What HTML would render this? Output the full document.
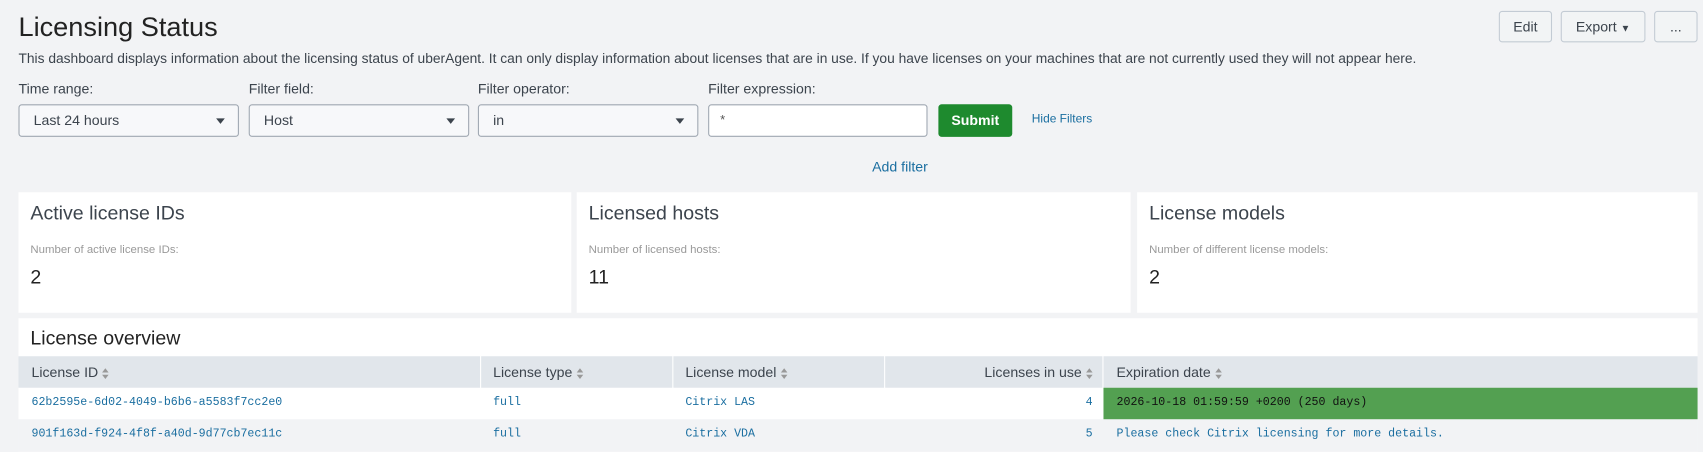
<!DOCTYPE html>
<html><head><style>
*{box-sizing:border-box;margin:0;padding:0}
html,body{width:1703px;height:452px;overflow:hidden;background:#f2f3f5}
body{font-family:"Liberation Sans",sans-serif;color:#3c444d;position:relative}
#w{position:absolute;left:0;top:0;width:1568px;height:416px;transform:scale(1.0861);transform-origin:0 0}
.a{position:absolute;white-space:nowrap}
.btn{position:absolute;top:10px;height:29px;border:1px solid #c3cbd4;border-radius:3px;background:#f2f4f5;font-size:13px;color:#3c444d;text-align:center;line-height:27px}
.lbl{position:absolute;top:74px;font-size:13px;color:#3c444d}
.dd{position:absolute;top:96px;height:30px;width:203px;border:1px solid #a0a8b2;border-radius:3px;background:#f7f8fa;font-size:13px;line-height:28px;padding-left:13px}
.dd:after{content:"";position:absolute;right:12px;top:12px;border-left:4px solid transparent;border-right:4px solid transparent;border-top:5px solid #3c444d}
.panel{position:absolute;background:#fff}
.pt{position:absolute;left:11px;top:9px;font-size:18px;color:#3c444d}
.ps{position:absolute;left:11px;top:47px;font-size:10.5px;color:#999}
.pv{position:absolute;left:11px;top:68px;font-size:18px;color:#222}
.th{position:absolute;top:328px;height:29px;background:#e1e6eb;font-size:13px;line-height:29px;color:#3c444d}
.s{display:inline-block;vertical-align:middle;margin-left:4px;width:6px;height:10px;position:relative}
.s:before{content:"";position:absolute;top:0;left:0;border-left:3px solid transparent;border-right:3px solid transparent;border-bottom:4px solid #999}
.s:after{content:"";position:absolute;bottom:0;left:0;border-left:3px solid transparent;border-right:3px solid transparent;border-top:4px solid #999}
.td{position:absolute;height:29px;line-height:29px;font-family:"Liberation Mono",monospace;font-size:10.7px;color:#1a6ea0}
</style></head><body><div id="w">
<div class="a" style="left:17px;top:11px;font-size:25px;color:#222">Licensing Status</div>
<div class="a" style="left:17px;top:47px;font-size:12.7px;color:#3c444d">This dashboard displays information about the licensing status of uberAgent. It can only display information about licenses that are in use. If you have licenses on your machines that are not currently used they will not appear here.</div>
<div class="btn" style="left:1380px;width:49px">Edit</div>
<div class="btn" style="left:1437px;width:78px">Export <span style="font-size:9px">▼</span></div>
<div class="btn" style="left:1523px;width:40px">...</div>

<div class="lbl" style="left:17px">Time range:</div>
<div class="lbl" style="left:229px">Filter field:</div>
<div class="lbl" style="left:440px">Filter operator:</div>
<div class="lbl" style="left:652px">Filter expression:</div>
<div class="dd" style="left:17px">Last 24 hours</div>
<div class="dd" style="left:229px">Host</div>
<div class="dd" style="left:440px">in</div>
<div class="a" style="left:652px;top:96px;width:202px;height:30px;border:1px solid #a0a8b2;border-radius:3px;background:#fff;font-size:12px;padding:6px 10px;color:#555">*</div>
<div class="a" style="left:864px;top:96px;width:68px;height:30px;border-radius:3px;background:#1e8a2e;color:#fff;font-weight:bold;font-size:13px;text-align:center;line-height:30px">Submit</div>
<div class="a" style="left:950px;top:104px;font-size:11px;color:#1a6ea0">Hide Filters</div>
<div class="a" style="left:803px;top:146px;font-size:13px;color:#1a6ea0">Add filter</div>

<div class="panel" style="left:17px;top:177px;width:509px;height:111px"><div class="pt">Active license IDs</div><div class="ps">Number of active license IDs:</div><div class="pv">2</div></div>
<div class="panel" style="left:531px;top:177px;width:510px;height:111px"><div class="pt">Licensed hosts</div><div class="ps">Number of licensed hosts:</div><div class="pv">11</div></div>
<div class="panel" style="left:1047px;top:177px;width:516px;height:111px"><div class="pt">License models</div><div class="ps">Number of different license models:</div><div class="pv">2</div></div>

<div class="panel" style="left:17px;top:293px;width:1546px;height:123px"><div class="a" style="left:11px;top:8px;font-size:18px;color:#222">License overview</div></div>
<div class="th" style="left:17px;width:425px;padding-left:12px">License ID<span class="s"></span></div>
<div class="th" style="left:443px;width:176px;padding-left:11px">License type<span class="s"></span></div>
<div class="th" style="left:620px;width:194px;padding-left:11px">License model<span class="s"></span></div>
<div class="th" style="left:815px;width:200px;text-align:right;padding-right:9px">Licenses in use<span class="s"></span></div>
<div class="th" style="left:1016px;width:547px;padding-left:12px">Expiration date<span class="s"></span></div>
<div class="a" style="left:17px;top:386px;width:1546px;height:30px;background:#f2f3f5"></div>
<div class="a" style="left:1016px;top:357px;width:547px;height:29px;background:#53a051"></div>

<div class="td" style="left:29px;top:357px">62b2595e-6d02-4049-b6b6-a5583f7cc2e0</div>
<div class="td" style="left:454px;top:357px">full</div>
<div class="td" style="left:631px;top:357px">Citrix LAS</div>
<div class="td" style="left:815px;width:191px;text-align:right;top:357px">4</div>
<div class="td" style="left:1028px;top:357px;color:#111">2026-10-18 01:59:59 +0200 (250 days)</div>
<div class="td" style="left:29px;top:386px">901f163d-f924-4f8f-a40d-9d77cb7ec11c</div>
<div class="td" style="left:454px;top:386px">full</div>
<div class="td" style="left:631px;top:386px">Citrix VDA</div>
<div class="td" style="left:815px;width:191px;text-align:right;top:386px">5</div>
<div class="td" style="left:1028px;top:386px">Please check Citrix licensing for more details.</div>
</div></body></html>
